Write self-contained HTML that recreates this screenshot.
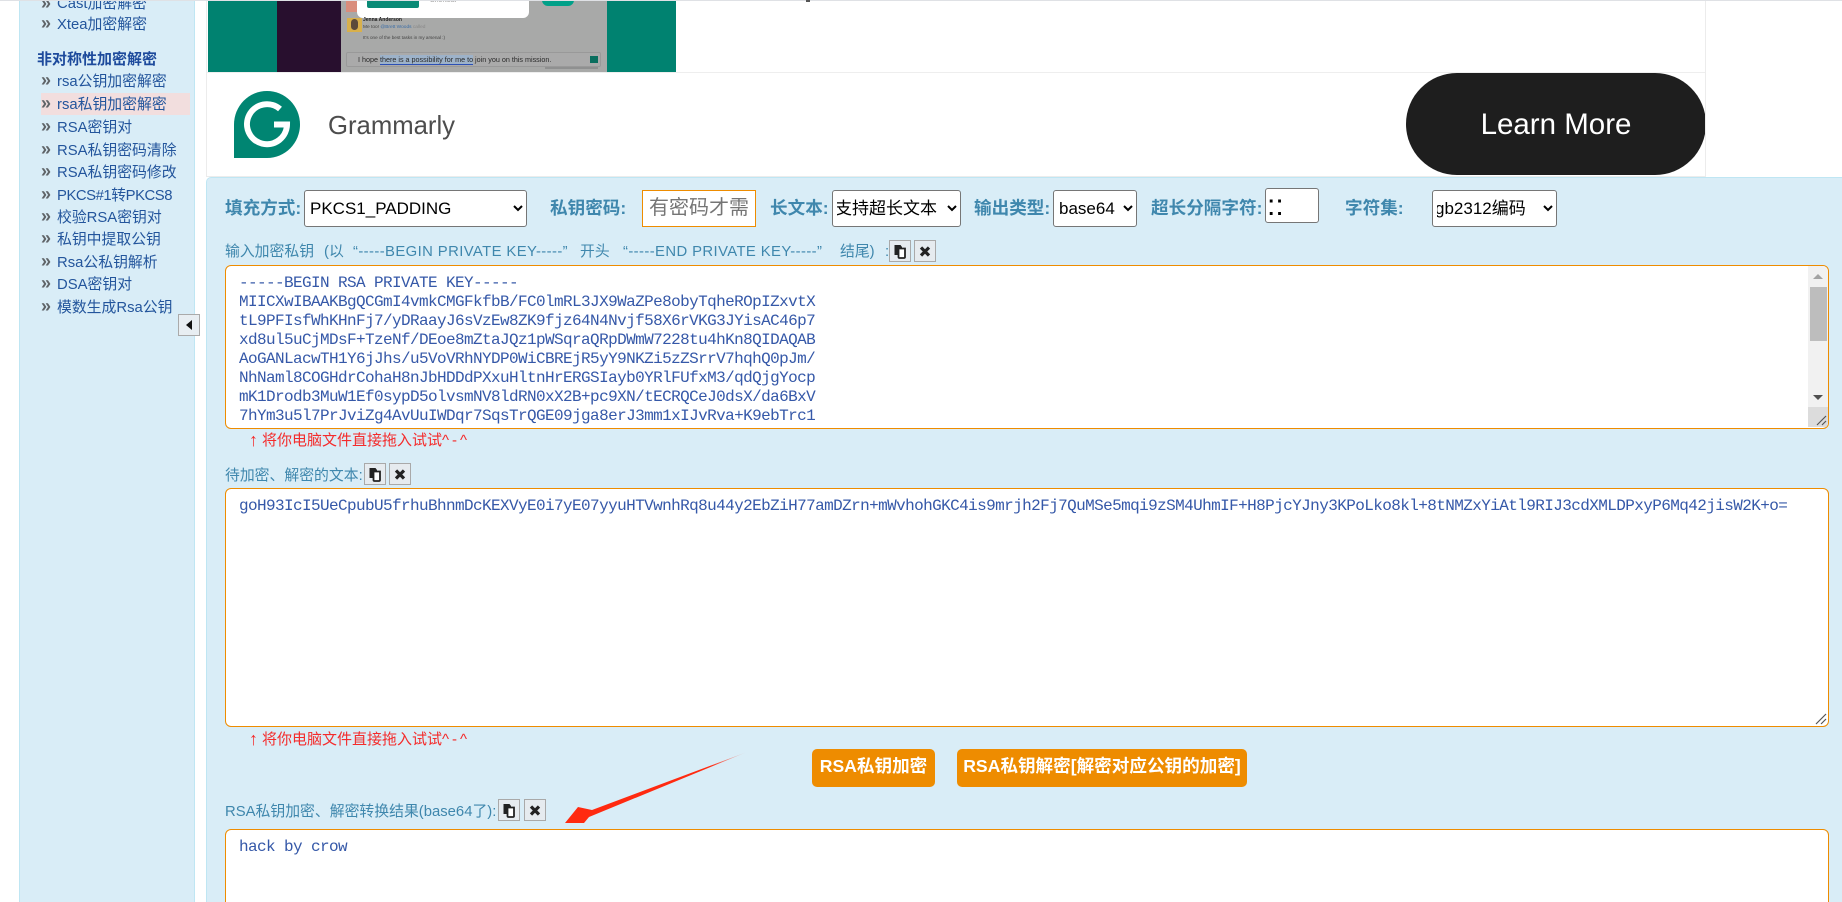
<!DOCTYPE html>
<html lang="zh"><head><meta charset="utf-8"><title>RSA私钥加密解密</title>
<style>
*{box-sizing:border-box}
html,body{margin:0;padding:0;width:1842px;height:902px;overflow:hidden;background:#fff}
body{position:relative;font-family:"Liberation Sans","Noto Sans CJK SC",sans-serif}
.a{position:absolute;white-space:nowrap}
.nav{left:57px;font-size:14.85px;line-height:22px;color:#23559c;height:22px}
.b{position:absolute;left:41px;font-size:18px;line-height:20px;color:#5f6468;font-weight:bold;margin-top:1px}
.lab{font-size:17.6px;font-weight:bold;color:#3f87ad;line-height:24px;top:196px}
.sm{font-size:14.85px;color:#3f87ad;line-height:20px}
.q{letter-spacing:.4px}
.red{font-size:15px;color:#f42b2b;line-height:20px}
.red b{position:absolute;left:1px;top:-1px;font-size:18px;font-weight:bold}
.red span{letter-spacing:3px}
select{position:absolute;top:190px;height:37px;font:17px "Liberation Sans","Noto Sans CJK SC",sans-serif;background:#fff;border:1px solid #767676;border-radius:3px;color:#000;padding-left:0;margin:0}
.ta{position:absolute;left:225px;width:1604px;background:#fff;border:1.5px solid #ee8c00;border-radius:6px;overflow:hidden}
.mono{position:absolute;left:13px;top:8px;font:16px/19px "Liberation Mono",monospace;letter-spacing:-.6px;color:#3558a8;white-space:pre}
.ib{position:absolute;width:22px;height:22px;border:1px solid #a9a9a9;background:#e6ebef}
.ib svg{position:absolute;left:3px;top:3px}
.btn{position:absolute;top:749px;height:38px;background:#ee8c00;border-radius:5px;color:#fff;font-size:17.6px;font-weight:bold;line-height:35px;text-align:center;white-space:nowrap}
</style></head><body>

<!-- sidebar -->
<div class="a" style="left:19px;top:0;width:176px;height:902px;background:#d9edf7;border-left:1px solid #bfe6f3;border-right:1px solid #bfe6f3"></div>
<div class="a" style="left:41px;top:93px;width:149px;height:22px;background:#f2dede"></div>
<div class="b" style="top:-8px">»</div><div class="a nav" style="top:-7px">Cast加密解密</div>
<div class="b" style="top:12px">»</div><div class="a nav" style="top:14px">Xtea加密解密</div>
<div class="a" style="left:37px;top:49px;font-size:15px;line-height:22px;font-weight:bold;color:#1d4a9c">非对称性加密解密</div>
<div class="b" style="top:69px">»</div><div class="a nav" style="top:71px">rsa公钥加密解密</div>
<div class="b" style="top:92px">»</div><div class="a nav" style="top:94px">rsa私钥加密解密</div>
<div class="b" style="top:115px">»</div><div class="a nav" style="top:117px">RSA密钥对</div>
<div class="b" style="top:138px">»</div><div class="a nav" style="top:140px">RSA私钥密码清除</div>
<div class="b" style="top:160px">»</div><div class="a nav" style="top:162px">RSA私钥密码修改</div>
<div class="b" style="top:183px">»</div><div class="a nav" style="top:185px;letter-spacing:-.45px">PKCS#1转PKCS8</div>
<div class="b" style="top:205px">»</div><div class="a nav" style="top:207px">校验RSA密钥对</div>
<div class="b" style="top:227px">»</div><div class="a nav" style="top:229px">私钥中提取公钥</div>
<div class="b" style="top:250px">»</div><div class="a nav" style="top:252px">Rsa公私钥解析</div>
<div class="b" style="top:272px">»</div><div class="a nav" style="top:274px">DSA密钥对</div>
<div class="b" style="top:295px">»</div><div class="a nav" style="top:297px">模数生成Rsa公钥</div>
<div class="a" style="left:178px;top:314px;width:22px;height:22px;border:1px solid #aaa;background:#e8eef2"><svg width="20" height="20" style="position:absolute;left:0;top:0"><path d="M7 10L13 5V15Z" fill="#111"/></svg></div>

<!-- ad -->
<div class="a" style="left:206px;top:0;width:1500px;height:177px;background:#fff;border:1px solid #ececec;border-top:0;overflow:hidden">
  <div class="a" style="left:1px;top:0;width:468px;height:72px;background:#008270;overflow:hidden">
    <div class="a" style="left:69px;top:0;width:64px;height:72px;background:#280f2e"></div>
    <div class="a" style="left:133px;top:0;width:266px;height:72px;background:#a8a9a8"></div>
    <div class="a" style="left:334px;top:0;width:32px;height:6px;background:#00a088;border-radius:0 0 14px 14px"></div>
    <div class="a" style="left:138px;top:0;width:11px;height:12px;background:#d98d7c"></div>
    <div class="a" style="left:139px;top:18px;width:15px;height:14px;background:#d8b04c"><div style="position:absolute;left:4px;top:1px;width:7px;height:11px;border-radius:4px;background:#5a4a3a"></div></div>
    <div class="a" style="left:149px;top:0;width:172px;height:18px;background:#fff;border-radius:0 0 6px 6px"></div>
    <div class="a" style="left:159px;top:0;width:52px;height:8px;background:#0a8a76;border-radius:0 0 2px 2px"></div>
    <div class="a" style="left:222px;top:-3px;font-size:7px;line-height:8px;color:#999">Shortcut</div>
    <div class="a" style="left:155px;top:16px;font-size:5px;line-height:8px;font-weight:bold;color:#222">Jenna Anderson</div>
    <div class="a" style="left:155px;top:24px;font-size:4.8px;line-height:8px;color:#444">Me too! <span style="color:#3b6da6">@Brett Woods</span> <span style="color:#888">called</span></div>
    <div class="a" style="left:155px;top:34px;font-size:4.6px;line-height:8px;color:#444">It's one of the best tasks in my arsenal :)</div>
    <div class="a" style="left:138px;top:52px;width:255px;height:15px;border:1px solid #999;border-radius:2px;background:#aaa"></div>
    <div class="a" style="left:150px;top:54px;font-size:7.2px;line-height:12px;color:#2a2a2a">I hope <span style="background:#9db2c9;border-bottom:1px solid #2c50b5">there is a possibility for me to</span> join you on this mission.</div>
    <div class="a" style="left:382px;top:56px;width:8px;height:7px;background:#0a6e5e"></div>
    <div class="a" style="left:337px;top:67px;width:53px;height:2px;background:#8f9090"></div>
  </div>
  <div class="a" style="left:0;top:72px;width:1498px;height:1px;background:#eee"></div>
  <svg class="a" style="left:27px;top:91px" width="68" height="69"><path d="M0 67V33.5A33 33.5 0 1 1 33 67Z" fill="#008572"/><path d="M46 18A20 20 0 1 0 53 33.5H40" fill="none" stroke="#fff" stroke-width="6"/></svg>
  <div class="a" style="left:121px;top:111px;font-size:25.7px;line-height:30px;color:#4d4d4d">Grammarly</div>
  <div class="a" style="left:1199px;top:73px;width:300px;height:102px;border-radius:51px;background:#1e1e1e;color:#fff;font-size:29.5px;line-height:103px;text-align:center">Learn More</div>
</div>
<div class="a" style="left:0;top:0;width:1842px;height:1px;background:#dfe1e5"></div>
<div class="a" style="left:806px;top:0;width:4px;height:2px;background:#555"></div>

<!-- panel -->
<div class="a" style="left:206px;top:177px;width:1640px;height:730px;background:#d9edf7;border:1px solid #bfe6f3;border-radius:5px 0 0 0"></div>

<div class="a lab" style="left:225px">填充方式:</div>
<select style="left:304px;width:223px;padding-left:1px"><option>PKCS1_PADDING</option></select>
<div class="a lab" style="left:550px">私钥密码:</div>
<input class="a" placeholder="有密码才需要" style="left:642px;top:190px;width:114px;height:37px;border:1.5px solid #ee8c00;padding:0 6px;font:20px 'Liberation Sans','Noto Sans CJK SC',sans-serif;background:#fff;outline:0">
<div class="a lab" style="left:770px">长文本:</div>
<select style="left:832px;width:129px;text-indent:-2px"><option>支持超长文本</option></select>
<div class="a lab" style="left:974px">输出类型:</div>
<select style="left:1053px;width:84px;padding-left:1px"><option>base64</option></select>
<div class="a lab" style="left:1151px">超长分隔字符:</div>
<input class="a" value="::" style="left:1265px;top:188px;width:54px;height:35px;border:1px solid #767676;border-radius:3px;padding:0 1px;font:30px 'Liberation Sans',sans-serif;color:#000;background:#fff;outline:0">
<div class="a lab" style="left:1345px">字符集:</div>
<select style="left:1432px;width:125px;text-indent:-2px"><option>gb2312编码</option></select>

<div class="a sm" style="left:225px;top:242px">输入加密私钥</div>
<div class="a sm" style="left:324px;top:242px">(以</div>
<div class="a sm q" style="left:353px;top:242px">“-----BEGIN PRIVATE KEY-----”</div>
<div class="a sm" style="left:580px;top:242px">开头</div>
<div class="a sm q" style="left:623px;top:242px">“-----END PRIVATE KEY-----”</div>
<div class="a sm" style="left:840px;top:242px">结尾)</div>
<div class="a sm" style="left:885px;top:242px">:</div>
<div class="ib" style="left:889px;top:240px"><svg width="14" height="15"><path d="M1.5 1h6l1.5 2v1H5v7H1.500z" fill="#222"/><path d="M5.500 4.500h6.500v8.500a1 1 0 0 1-1 1H6.500a1 1 0 0 1-1-1z" fill="#fff" stroke="#222" stroke-width="1.800"/></svg></div>
<div class="ib" style="left:914px;top:240px"><svg width="14" height="15"><path d="M3 3.500l8 8M11 3.500l-8 8" stroke="#222" stroke-width="3.200"/></svg></div>

<div class="ta" style="top:265px;height:164px">
  <div class="mono">-----BEGIN RSA PRIVATE KEY-----
MIICXwIBAAKBgQCGmI4vmkCMGFkfbB/FC0lmRL3JX9WaZPe8obyTqheROpIZxvtX
tL9PFIsfWhKHnFj7/yDRaayJ6sVzEw8ZK9fjz64N4Nvjf58X6rVKG3JYisAC46p7
xd8ul5uCjMDsF+TzeNf/DEoe8mZtaJQz1pWSqraQRpDWmW7228tu4hKn8QIDAQAB
AoGANLacwTH1Y6jJhs/u5VoVRhNYDP0WiCBREjR5yY9NKZi5zZSrrV7hqhQ0pJm/
NhNaml8COGHdrCohaH8nJbHDDdPXxuHltnHrERGSIayb0YRlFUfxM3/qdQjgYocp
mK1Drodb3MuW1Ef0sypD5olvsmNV8ldRN0xX2B+pc9XN/tECRQCeJ0dsX/da6BxV
7hYm3u5l7PrJviZg4AvUuIWDqr7SqsTrQGE09jga8erJ3mm1xIJvRva+K9ebTrc1</div>
  <div style="position:absolute;right:0;top:0;width:20px;height:161px;background:#f1f1f1">
    <svg width="20" height="161" style="position:absolute;left:0;top:0">
      <path d="M10 8L15 13H5Z" fill="#a3a3a3"/>
      <rect x="2" y="21" width="17" height="54" fill="#bdbdbd"/>
      <path d="M10 134L15 129H5Z" fill="#505050"/>
      <rect x="0" y="141" width="20" height="20" fill="#dcdcdc"/>
      <path d="M9 159L18 150M14 159L18 155" stroke="#555" stroke-width="1.200"/>
    </svg>
  </div>
</div>
<div class="a red" style="left:248px;top:431px"><b>↑</b><span style="margin-left:14px;letter-spacing:0">将你电脑文件直接拖入试试</span><span>^-^</span></div>

<div class="a sm" style="left:225px;top:466px">待加密、解密的文本:</div>
<div class="ib" style="left:364px;top:463px"><svg width="14" height="15"><path d="M1.5 1h6l1.5 2v1H5v7H1.500z" fill="#222"/><path d="M5.500 4.500h6.500v8.500a1 1 0 0 1-1 1H6.500a1 1 0 0 1-1-1z" fill="#fff" stroke="#222" stroke-width="1.800"/></svg></div>
<div class="ib" style="left:389px;top:463px"><svg width="14" height="15"><path d="M3 3.500l8 8M11 3.500l-8 8" stroke="#222" stroke-width="3.200"/></svg></div>
<div class="ta" style="top:488px;height:239px">
  <div class="mono">goH93IcI5UeCpubU5frhuBhnmDcKEXVyE0i7yE07yyuHTVwnhRq8u44y2EbZiH77amDZrn+mWvhohGKC4is9mrjh2Fj7QuMSe5mqi9zSM4UhmIF+H8PjcYJny3KPoLko8kl+8tNMZxYiAtl9RIJ3cdXMLDPxyP6Mq42jisW2K+o=</div>
  <svg width="14" height="14" style="position:absolute;right:1px;bottom:1px"><path d="M3 13L13 3M8 13L13 8" stroke="#555" stroke-width="1.200"/></svg>
</div>
<div class="a red" style="left:248px;top:730px"><b>↑</b><span style="margin-left:14px;letter-spacing:0">将你电脑文件直接拖入试试</span><span>^-^</span></div>

<div class="btn" style="left:812px;width:123px">RSA私钥加密</div>
<div class="btn" style="left:957px;width:290px">RSA私钥解密[解密对应公钥的加密]</div>

<div class="a sm" style="left:225px;top:802px">RSA私钥加密、解密转换结果(base64了):</div>
<div class="ib" style="left:498px;top:799px"><svg width="14" height="15"><path d="M1.5 1h6l1.5 2v1H5v7H1.500z" fill="#222"/><path d="M5.500 4.500h6.500v8.500a1 1 0 0 1-1 1H6.500a1 1 0 0 1-1-1z" fill="#fff" stroke="#222" stroke-width="1.800"/></svg></div>
<div class="ib" style="left:524px;top:799px"><svg width="14" height="15"><path d="M3 3.500l8 8M11 3.500l-8 8" stroke="#222" stroke-width="3.200"/></svg></div>
<div class="ta" style="top:829px;height:90px">
  <div class="mono">hack by crow</div>
</div>

<!-- red annotation arrow -->
<svg class="a" style="left:555px;top:745px" width="200" height="85">
  <defs><linearGradient id="g" x1="192" y1="7" x2="10" y2="78" gradientUnits="userSpaceOnUse"><stop offset="0" stop-color="#ff2a10" stop-opacity="0"/><stop offset=".2" stop-color="#ff2a10"/><stop offset="1" stop-color="#ff2a10"/></linearGradient></defs>
  <path d="M192 7L37 65L23 62L10 78L29 78L34 72Z" fill="url(#g)"/>
</svg>
</body></html>
